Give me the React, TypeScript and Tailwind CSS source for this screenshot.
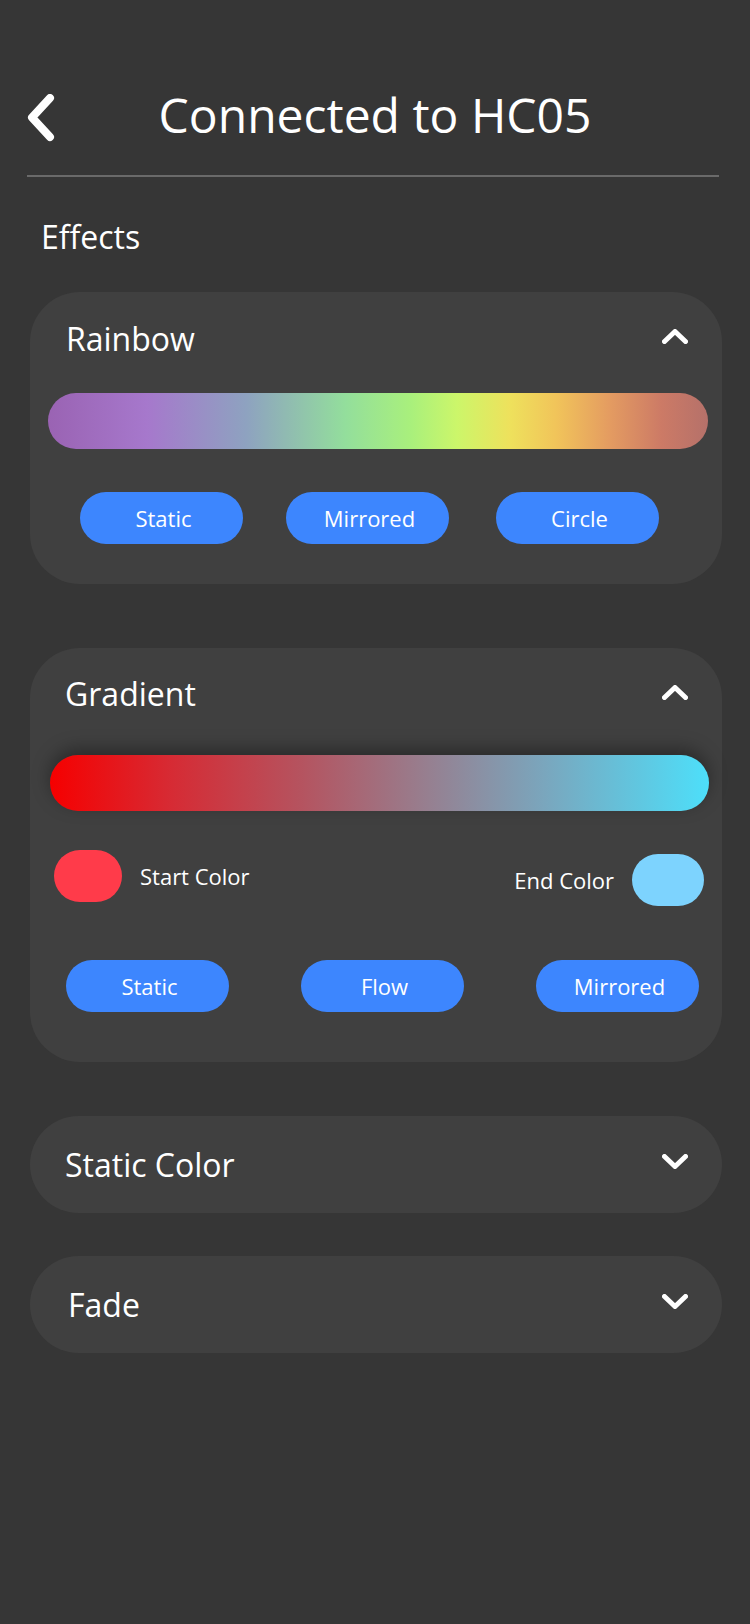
import React from "react";

const font = { fontFamily: '"Open Sans", "Noto Sans", sans-serif' };

function ChevronUp() {
  return (
    <svg width="26" height="15" viewBox="0 0 26 15" fill="none">
      <polyline points="2.5,12.5 13,2.5 23.5,12.5" stroke="white" strokeWidth="5" strokeLinecap="round" strokeLinejoin="round" />
    </svg>
  );
}

function ChevronDown() {
  return (
    <svg width="26" height="15" viewBox="0 0 26 15" fill="none">
      <polyline points="2.5,2.5 13,12.5 23.5,2.5" stroke="white" strokeWidth="5" strokeLinecap="round" strokeLinejoin="round" />
    </svg>
  );
}

function Pill({ label, className = "" }: { label: string; className?: string }) {
  return (
    <div className={`w-[163px] h-[52px] rounded-full bg-[#3d86fe] flex items-center justify-center pl-[4px] text-white text-[22px] leading-none ${className}`}>
      {label}
    </div>
  );
}

export default function App() {
  return (
    <div className="w-[750px] min-h-[1624px] bg-[#363636] text-white" style={font}>
      {/* Header */}
      <div className="pt-[85px] flex items-center h-[145px]">
        <div className="w-[60px] flex justify-end">
          <svg width="30" height="48" viewBox="0 0 30 48" fill="none" className="mt-[6px] mr-[4px]">
            <polyline points="24,4 6,23.5 24,43" stroke="white" strokeWidth="8" strokeLinecap="round" strokeLinejoin="round" />
          </svg>
        </div>
        <div className="flex-1 text-center text-[48px] leading-[60px]">Connected to HC05</div>
        <div className="w-[60px]" />
      </div>
      <div className="mt-[30px] ml-[27px] w-[692px] h-[2px] bg-[#6a6a6a]" />

      <div className="mt-[40px] pl-[41px] text-[32px] leading-[40px]">Effects</div>

      {/* Rainbow */}
      <div className="mt-[35px] ml-[30px] w-[692px] rounded-[50px] bg-[#404040] pt-[23px] pb-[40px]">
        <div className="h-[48px] flex items-center justify-between pl-[36px] pr-[34px]">
          <span className="text-[32px] leading-[48px]">Rainbow</span>
          <div className="-mt-[6px]"><ChevronUp /></div>
        </div>
        <div
          className="mt-[30px] ml-[18px] w-[660px] h-[56px] rounded-full"
          style={{
            background:
              "linear-gradient(to right, #9a63b3 0%, #a678cc 15%, #8ea2c0 30%, #93de9c 45%, #a9f07c 55%, #ccf66a 62%, #eee15c 70%, #f1c45a 77%, #e49c61 85%, #cc7a66 93%, #b5716a 100%)",
          }}
        />
        <div className="mt-[43px] pl-[50px] flex">
          <Pill label="Static" />
          <Pill label="Mirrored" className="ml-[43px]" />
          <Pill label="Circle" className="ml-[47px]" />
        </div>
      </div>

      {/* Gradient */}
      <div className="mt-[64px] ml-[30px] w-[692px] rounded-[50px] bg-[#404040] pt-[22px] pb-[50px]">
        <div className="h-[48px] flex items-center justify-between pl-[35px] pr-[34px]">
          <span className="text-[32px] leading-[48px]">Gradient</span>
          <div className="-mt-[4px]"><ChevronUp /></div>
        </div>
        <div
          className="mt-[37px] ml-[20px] w-[659px] h-[56px] rounded-full shadow-[0_-6px_18px_rgba(0,0,0,0.35)]"
          style={{
            background:
              "linear-gradient(to right, #f60000 0%, #d72a33 18%, #b5535f 38%, #9a7a8a 55%, #7aa6bd 75%, #4ddffa 100%)",
          }}
        />
        <div className="mt-[39px] h-[56px] flex justify-between items-start pl-[24px] pr-[18px]">
          <div className="flex items-center gap-[18px]">
            <div className="w-[68px] h-[52px] rounded-full bg-[#ff3b4a]" />
            <span className="text-[22px] leading-none">Start Color</span>
          </div>
          <div className="mt-[4px] flex items-center gap-[18px]">
            <span className="text-[22px] leading-none">End Color</span>
            <div className="w-[72px] h-[52px] rounded-full bg-[#7dd3fe]" />
          </div>
        </div>
        <div className="mt-[54px] flex justify-between pl-[36px] pr-[23px]">
          <Pill label="Static" />
          <Pill label="Flow" />
          <Pill label="Mirrored" />
        </div>
      </div>

      {/* Static Color */}
      <div className="mt-[54px] ml-[30px] w-[692px] h-[97px] rounded-[50px] bg-[#404040] flex items-center justify-between pl-[35px] pr-[34px]">
        <span className="text-[32px] leading-[48px]">Static Color</span>
        <div className="-mt-[6px]"><ChevronDown /></div>
      </div>

      {/* Fade */}
      <div className="mt-[43px] ml-[30px] w-[692px] h-[97px] rounded-[50px] bg-[#404040] flex items-center justify-between pl-[38px] pr-[34px]">
        <span className="text-[32px] leading-[48px]">Fade</span>
        <div className="-mt-[6px]"><ChevronDown /></div>
      </div>
    </div>
  );
}
